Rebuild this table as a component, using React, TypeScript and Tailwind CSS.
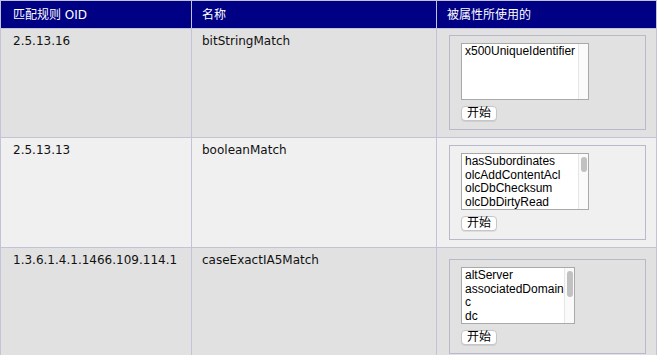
const rows = [
  {
    oid: '2.5.13.16',
    name: 'bitStringMatch',
    attrs: ['x500UniqueIdentifier'],
    bg: 'bg-[#e1e1e1]',
    listWidth: 'w-[128px]',
    thumb: '',
    pad: 'pt-[6px]',
  },
  {
    oid: '2.5.13.13',
    name: 'booleanMatch',
    attrs: ['hasSubordinates', 'olcAddContentAcl', 'olcDbChecksum', 'olcDbDirtyRead'],
    bg: 'bg-[#f0f0f0]',
    listWidth: 'w-[128px]',
    thumb: 'h-[15px]',
    pad: 'pt-[7px]',
  },
  {
    oid: '1.3.6.1.4.1.1466.109.114.1',
    name: 'caseExactIA5Match',
    attrs: ['altServer', 'associatedDomain', 'c', 'dc'],
    bg: 'bg-[#e1e1e1]',
    listWidth: 'w-[114px]',
    thumb: 'h-[26px]',
    pad: 'pt-[11px]',
  },
]

function ListBox({ items, width, thumb }: { items: string[]; width: string; thumb: string }) {
  return (
    <div className={`${width} h-[57px] flex bg-white border border-[#a9a9a9] overflow-hidden`}>
      <div className="flex-1 min-w-0 pl-[3px] pt-[1px] leading-[13.5px] text-[12px] text-black whitespace-nowrap overflow-hidden font-['Liberation_Sans',Arial,sans-serif]">
        {items.map((item) => (
          <div key={item}>{item}</div>
        ))}
      </div>
      <div className="w-[10px] shrink-0 border-l border-[#e6e6e6] bg-[#fafafa] flex justify-center pt-[3px]">
        {thumb && <div className={`w-[6px] ${thumb} rounded-full bg-[#c1c1c1]`} />}
      </div>
    </div>
  )
}

export default function App() {
  return (
    <div className="w-[659px] h-[355px] overflow-hidden bg-white font-['DejaVu_Sans','Noto_Sans_CJK_SC',sans-serif] text-[12px] text-[#111]">
      <div className="w-[657px] grid grid-cols-[190px_244px_219px] gap-px p-px bg-[#c2c2d8]">
        {/* header */}
        <div className="h-[27px] bg-[#000084] text-white flex items-center pl-[12px]">匹配规则 OID</div>
        <div className="h-[27px] bg-[#000084] text-white flex items-center pl-[10px]">名称</div>
        <div className="h-[27px] bg-[#000084] text-white flex items-center pl-[10px]">被属性所使用的</div>

        {rows.map((row) => (
          <>
            <div key={row.oid + 'a'} className={`${row.bg} pl-[12px] pt-[5px] leading-[14px]`}>{row.oid}</div>
            <div key={row.oid + 'b'} className={`${row.bg} pl-[10px] pt-[5px] leading-[14px]`}>{row.name}</div>
            <div key={row.oid + 'c'} className={`${row.bg} pl-[12px] pr-[10px] ${row.pad} pb-[7px]`}>
              <div className="border border-[#b9b9cc] pl-[11px] pt-[7px] pb-[8px] flex flex-col items-start gap-[6px]">
                <ListBox items={row.attrs} width={row.listWidth} thumb={row.thumb} />
                <button className="h-[15px] w-[36px] flex items-center justify-center bg-white border border-[#c6c6c6] rounded-[4px] text-[12px] leading-[13px] text-black shadow-[0_1px_0_rgba(0,0,0,0.08)]">
                  开始
                </button>
              </div>
            </div>
          </>
        ))}
      </div>
    </div>
  )
}
